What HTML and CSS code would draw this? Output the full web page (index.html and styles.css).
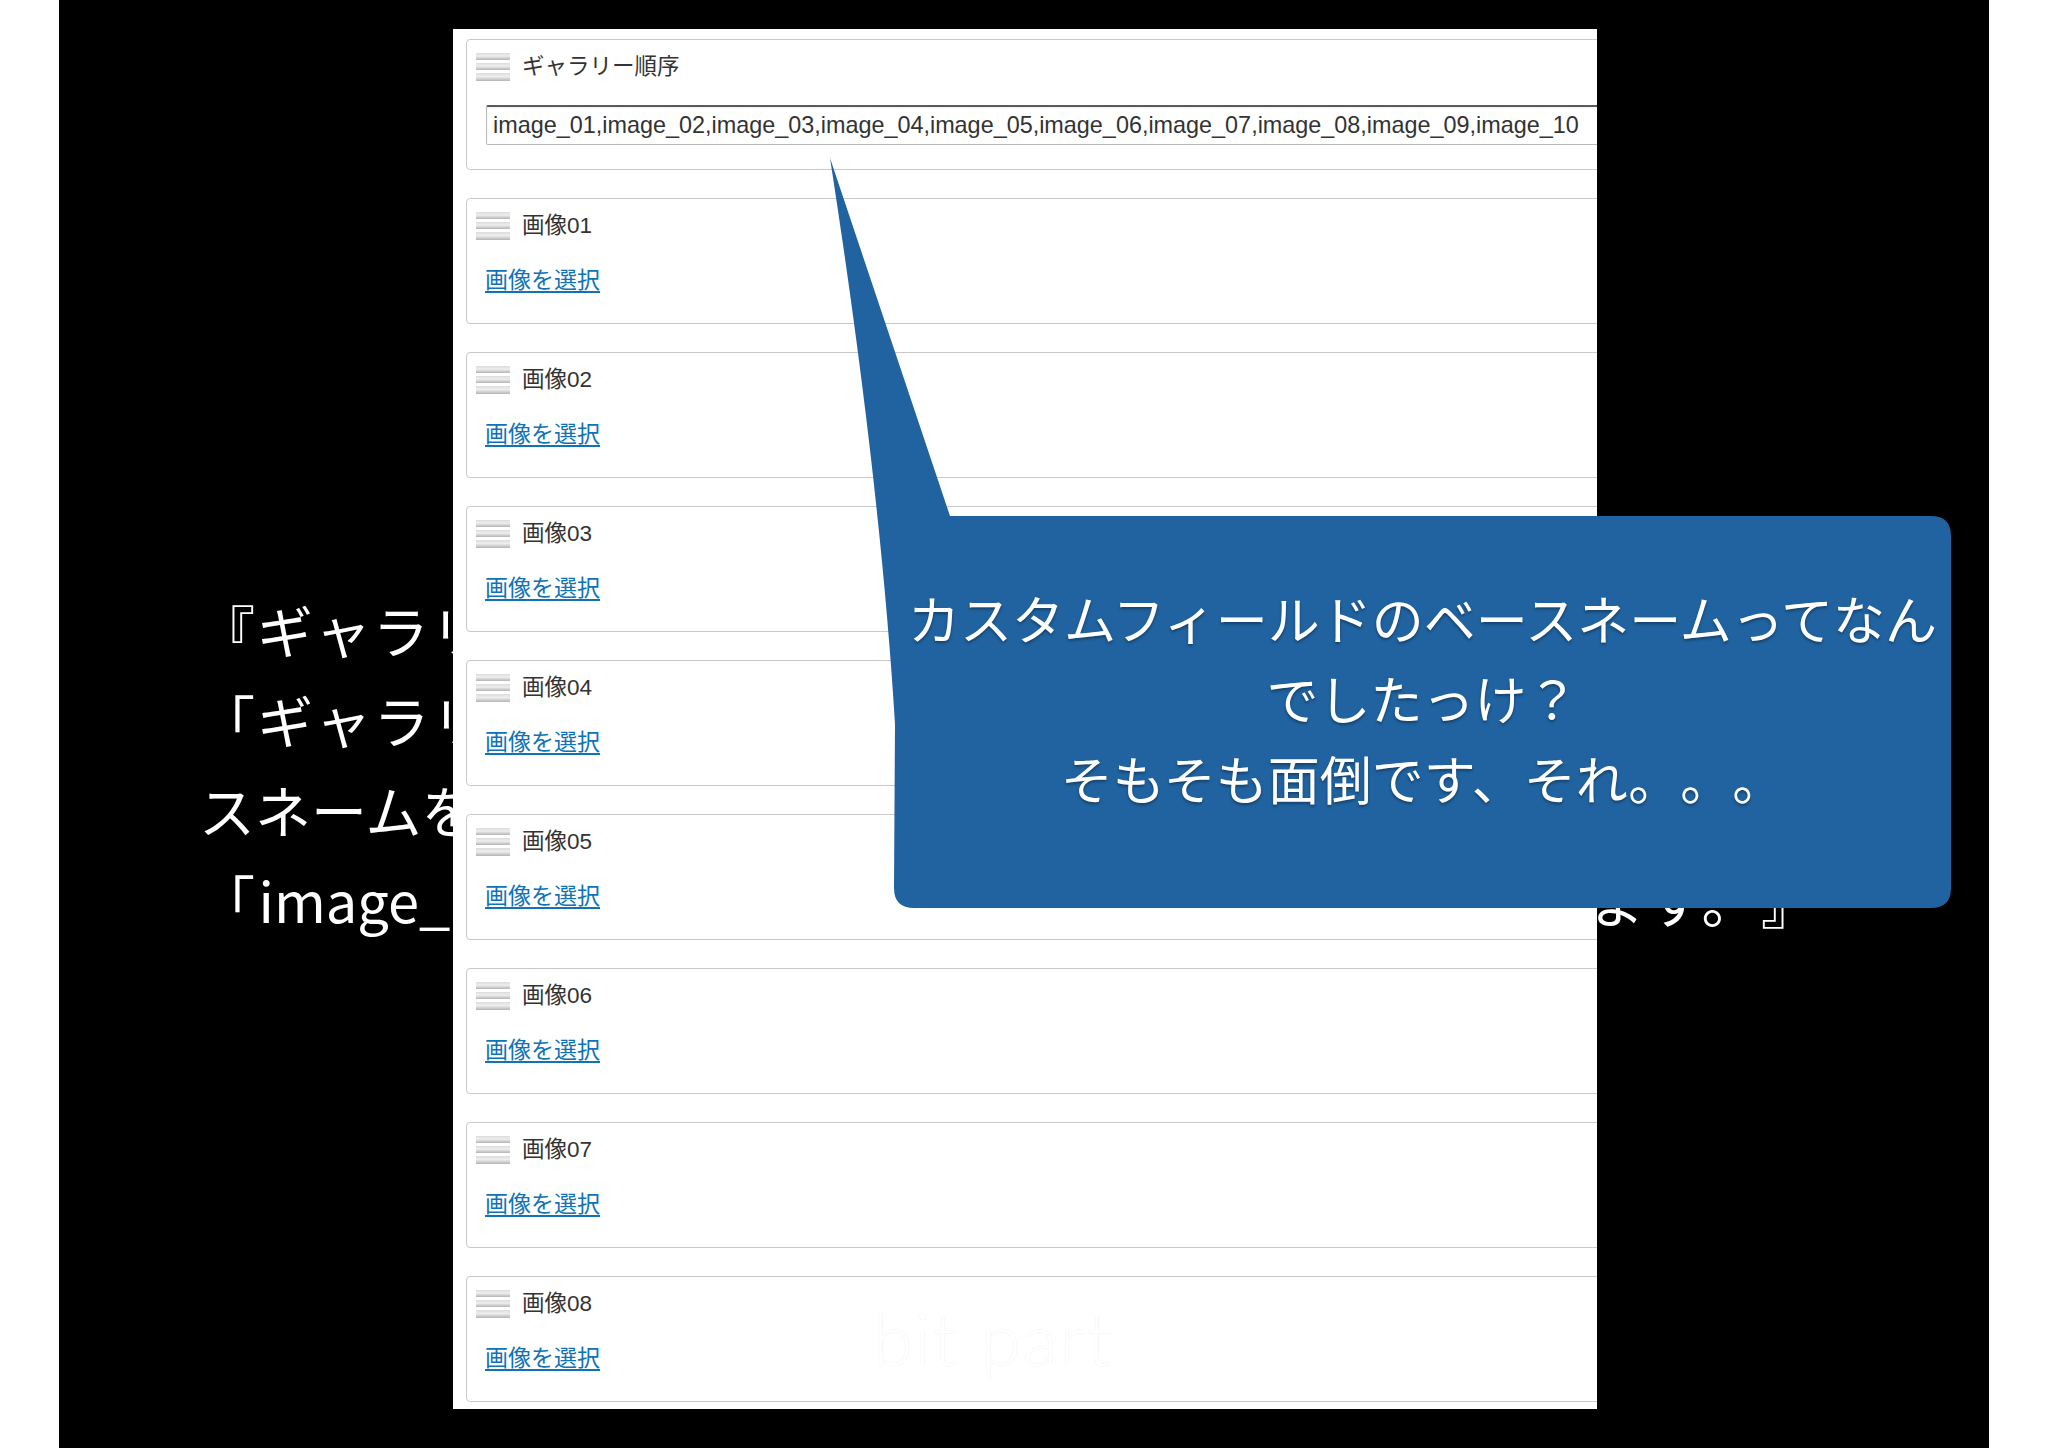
FILE: index.html
```html
<!DOCTYPE html>
<html lang="ja">
<head>
<meta charset="utf-8">
<title>ギャラリー順序</title>
<link rel="stylesheet" href="styles.css">
</head>
<body>
<div class="stage">
  <div class="slide">
    <div class="slide-text">
      <p class="line">『ギャラリー順序』のフィールドに、画像を表示したい順番で</p>
      <p class="line">「ギャラリー」グループで登録したカスタムフィールドのベー</p>
      <p class="line">スネームをカンマ区切りで全て入力します。例えば、次のように</p>
      <p class="line">「image_01,image_02,image_03…」のように入力します。』</p>
    </div>
  </div>

  <div class="panel">
    <div class="card">
      <div class="card-head">
        <svg class="handle" viewBox="0 0 34 28" width="34" height="28"><defs><linearGradient id="hg" x1="0" y1="0" x2="0" y2="1"><stop offset="0" stop-color="#dcdcdc"/><stop offset="0.45" stop-color="#eeeeee"/><stop offset="1" stop-color="#b4b4b4"/></linearGradient></defs><rect x="0" y="0" width="34" height="7" fill="url(#hg)"/><rect x="0" y="10" width="34" height="7" fill="url(#hg)"/><rect x="0" y="20" width="34" height="8" fill="url(#hg)"/></svg>
        <span class="card-title">ギャラリー順序</span>
      </div>
      <div class="order-input">image_01,image_02,image_03,image_04,image_05,image_06,image_07,image_08,image_09,image_10</div>
    </div>

    <div class="card">
      <div class="card-head"><svg class="handle" viewBox="0 0 34 28" width="34" height="28"><rect x="0" y="0" width="34" height="7" fill="url(#hg)"/><rect x="0" y="10" width="34" height="7" fill="url(#hg)"/><rect x="0" y="20" width="34" height="8" fill="url(#hg)"/></svg><span class="card-title">画像01</span></div>
      <a class="pick" href="#">画像を選択</a>
    </div>
    <div class="card">
      <div class="card-head"><svg class="handle" viewBox="0 0 34 28" width="34" height="28"><rect x="0" y="0" width="34" height="7" fill="url(#hg)"/><rect x="0" y="10" width="34" height="7" fill="url(#hg)"/><rect x="0" y="20" width="34" height="8" fill="url(#hg)"/></svg><span class="card-title">画像02</span></div>
      <a class="pick" href="#">画像を選択</a>
    </div>
    <div class="card">
      <div class="card-head"><svg class="handle" viewBox="0 0 34 28" width="34" height="28"><rect x="0" y="0" width="34" height="7" fill="url(#hg)"/><rect x="0" y="10" width="34" height="7" fill="url(#hg)"/><rect x="0" y="20" width="34" height="8" fill="url(#hg)"/></svg><span class="card-title">画像03</span></div>
      <a class="pick" href="#">画像を選択</a>
    </div>
    <div class="card">
      <div class="card-head"><svg class="handle" viewBox="0 0 34 28" width="34" height="28"><rect x="0" y="0" width="34" height="7" fill="url(#hg)"/><rect x="0" y="10" width="34" height="7" fill="url(#hg)"/><rect x="0" y="20" width="34" height="8" fill="url(#hg)"/></svg><span class="card-title">画像04</span></div>
      <a class="pick" href="#">画像を選択</a>
    </div>
    <div class="card">
      <div class="card-head"><svg class="handle" viewBox="0 0 34 28" width="34" height="28"><rect x="0" y="0" width="34" height="7" fill="url(#hg)"/><rect x="0" y="10" width="34" height="7" fill="url(#hg)"/><rect x="0" y="20" width="34" height="8" fill="url(#hg)"/></svg><span class="card-title">画像05</span></div>
      <a class="pick" href="#">画像を選択</a>
    </div>
    <div class="card">
      <div class="card-head"><svg class="handle" viewBox="0 0 34 28" width="34" height="28"><rect x="0" y="0" width="34" height="7" fill="url(#hg)"/><rect x="0" y="10" width="34" height="7" fill="url(#hg)"/><rect x="0" y="20" width="34" height="8" fill="url(#hg)"/></svg><span class="card-title">画像06</span></div>
      <a class="pick" href="#">画像を選択</a>
    </div>
    <div class="card">
      <div class="card-head"><svg class="handle" viewBox="0 0 34 28" width="34" height="28"><rect x="0" y="0" width="34" height="7" fill="url(#hg)"/><rect x="0" y="10" width="34" height="7" fill="url(#hg)"/><rect x="0" y="20" width="34" height="8" fill="url(#hg)"/></svg><span class="card-title">画像07</span></div>
      <a class="pick" href="#">画像を選択</a>
    </div>
    <div class="card">
      <div class="card-head"><svg class="handle" viewBox="0 0 34 28" width="34" height="28"><rect x="0" y="0" width="34" height="7" fill="url(#hg)"/><rect x="0" y="10" width="34" height="7" fill="url(#hg)"/><rect x="0" y="20" width="34" height="8" fill="url(#hg)"/></svg><span class="card-title">画像08</span></div>
      <a class="pick" href="#">画像を選択</a>
    </div>

    <div class="watermark">bit part</div>
  </div>

  <svg class="callout-shape" viewBox="0 0 2048 1448" width="2048" height="1448">
    <path d="M830,158 L950,516 L1931,516 Q1951,516 1951,536 L1951,888 Q1951,908 1931,908 L914,908 Q894,908 894,888 L895,724 Q880,480 830,158 Z" fill="#2063a0"/>
  </svg>
  <div class="callout-text">
    <p>カスタムフィールドのベースネームってなん</p>
    <p>でしたっけ？</p>
    <p>そもそも面倒です、それ。。。</p>
  </div>
</div>
</body>
</html>
```

FILE: styles.css
```css
html, body {
  margin: 0;
  padding: 0;
  background: #ffffff;
  overflow: hidden;
}

.stage {
  position: relative;
  width: 2048px;
  height: 1448px;
}

.slide {
  margin-left: 59px;
  width: 1930px;
  height: 1448px;
  background: #000000;
  overflow: hidden;
}

.slide-text {
  padding-top: 584px;
  padding-left: 140px;
  width: 1618px;
  color: #ffffff;
  font-family: "Noto Sans CJK JP", "Noto Sans", sans-serif;
  font-size: 56px;
  line-height: 90px;
  text-spacing-trim: space-all;
}

.line {
  margin: 0;
  white-space: nowrap;
  text-align: justify;
  text-align-last: justify;
}

.panel {
  position: absolute;
  left: 453px;
  top: 29px;
  width: 1144px;
  height: 1380px;
  background: #ffffff;
  overflow: hidden;
  padding: 10px 0 0 13px;
  box-sizing: border-box;
}

.card {
  width: 1300px;
  border: 1px solid #c9c9c9;
  border-radius: 4px;
  padding: 12px 0 26px 0;
  margin-bottom: 28px;
  box-sizing: border-box;
  display: flex;
  flex-direction: column;
  align-items: flex-start;
  background: #ffffff;
}

.card-head {
  display: flex;
  align-items: center;
  gap: 12px;
  height: 30px;
  padding-left: 9px;
}

.handle {
  display: block;
  flex: none;
}

.card-title {
  font-family: "Liberation Sans", "Noto Sans CJK JP", sans-serif;
  font-size: 22.5px;
  color: #333333;
  line-height: 30px;
}

.order-input {
  margin-top: 23px;
  margin-left: 19px;
  margin-bottom: -2px;
  height: 40px;
  width: 1260px;
  box-sizing: border-box;
  border: 1px solid #b9b9b9;
  border-top: 2px solid #5a5a5a;
  border-radius: 2px;
  padding-left: 6px;
  font-family: "Liberation Sans", Arial, sans-serif;
  font-size: 23.4px;
  line-height: 36px;
  color: #333333;
  white-space: nowrap;
  box-shadow: inset 0 1px 2px rgba(0, 0, 0, 0.07);
}

.pick {
  margin-top: 22px;
  margin-bottom: 4px;
  margin-left: 18px;
  font-family: "Noto Sans CJK JP", sans-serif;
  font-size: 23px;
  line-height: 30px;
  color: #0f73b6;
  text-decoration: underline;
  text-underline-offset: 3px;
}

.watermark {
  position: absolute;
  left: 420px;
  top: 1266px;
  font-family: "Lato", "Noto Sans", sans-serif;
  font-weight: 300;
  font-size: 72px;
  letter-spacing: 2px;
  color: #ffffff;
  text-shadow: 0 0 1px rgba(0, 0, 0, 0.12);
}

.callout-shape {
  position: absolute;
  left: 0;
  top: 0;
  pointer-events: none;
}

.callout-text {
  position: absolute;
  left: 894px;
  top: 516px;
  width: 1057px;
  height: 392px;
  padding-bottom: 28px;
  box-sizing: border-box;
  display: flex;
  flex-direction: column;
  justify-content: center;
  align-items: center;
  color: #ffffff;
  font-family: "Noto Sans CJK JP", "Noto Sans", sans-serif;
  font-size: 52px;
  line-height: 80px;
  text-shadow: 0 2px 3px rgba(0, 0, 0, 0.35);
  text-spacing-trim: space-all;
}

.callout-text p {
  margin: 0;
  white-space: nowrap;
}
```
